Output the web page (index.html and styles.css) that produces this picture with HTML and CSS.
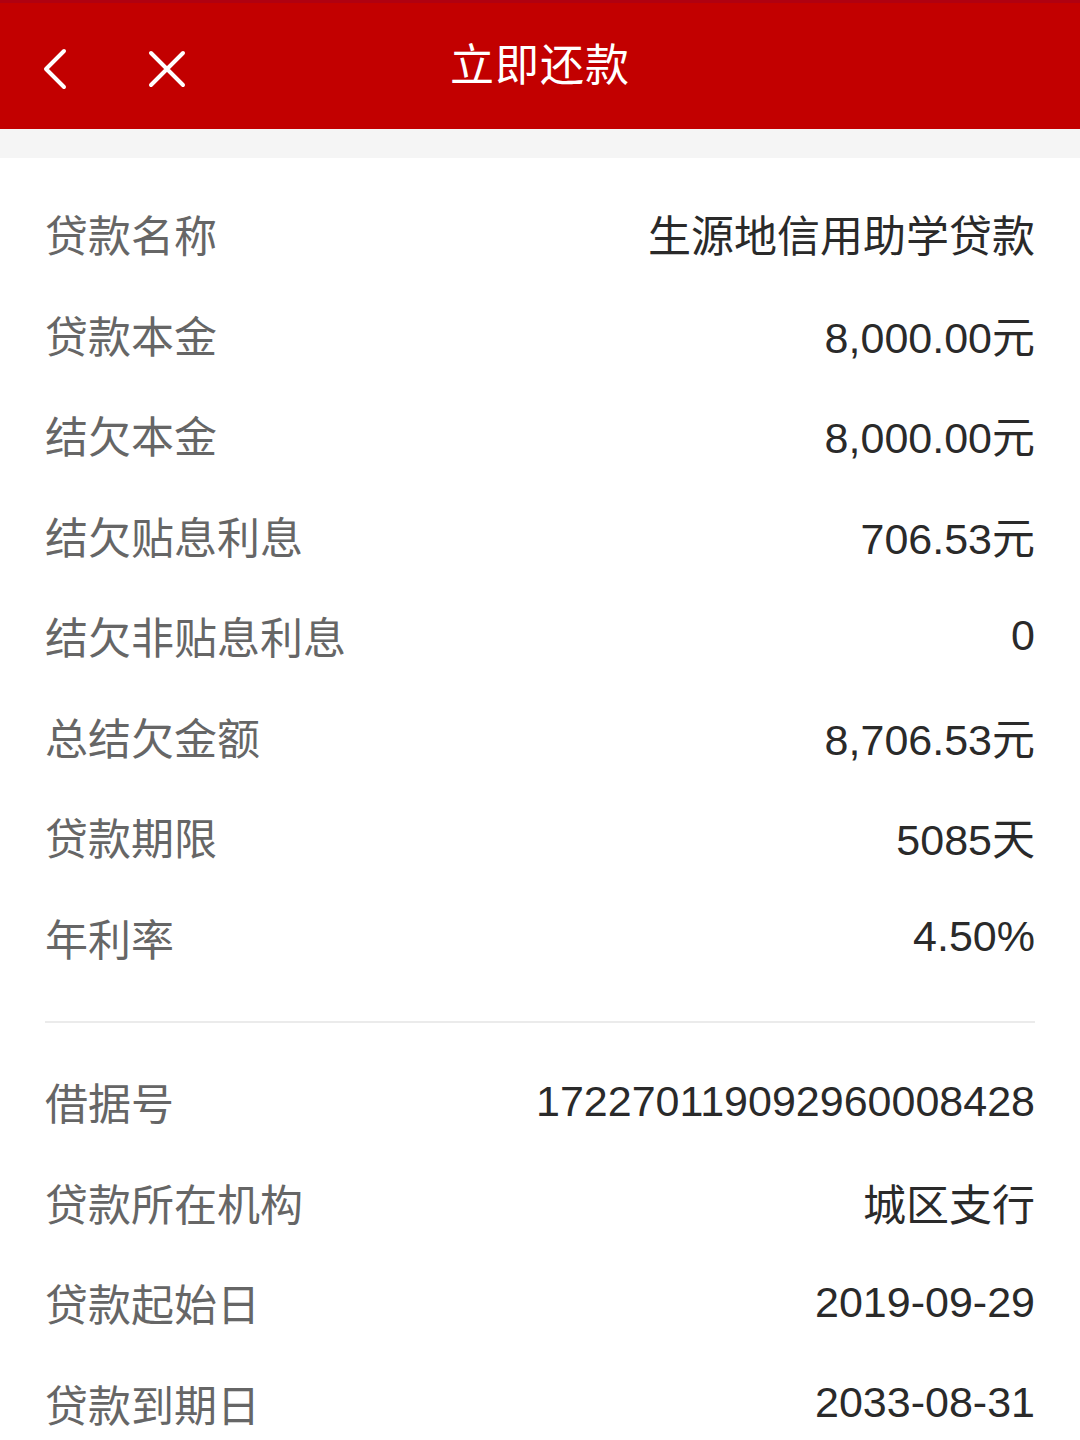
FILE: index.html
```html
<!DOCTYPE html>
<html lang="zh-CN">
<head>
<meta charset="utf-8">
<title>立即还款</title>
<link rel="stylesheet" href="styles.css">
</head>
<body>
<header class="topbar">
  <div class="nav-icons">
    <svg class="icon-back" width="30" height="44" viewBox="0 0 30 44"><path d="M22 4 L4 22 L22 40" fill="none" stroke="#fff" stroke-width="4" stroke-linecap="round" stroke-linejoin="round"/></svg>
    <svg class="icon-close" width="38" height="38" viewBox="0 0 38 38"><path d="M3 3 L35 35 M35 3 L3 35" fill="none" stroke="#fff" stroke-width="4" stroke-linecap="round"/></svg>
  </div>
  <h1 class="title">立即还款</h1>
</header>
<div class="band"></div>
<main class="content">
  <section class="group">
    <div class="row"><span class="label">贷款名称</span><span class="value">生源地信用助学贷款</span></div>
    <div class="row"><span class="label">贷款本金</span><span class="value">8,000.00元</span></div>
    <div class="row"><span class="label">结欠本金</span><span class="value">8,000.00元</span></div>
    <div class="row"><span class="label">结欠贴息利息</span><span class="value">706.53元</span></div>
    <div class="row"><span class="label">结欠非贴息利息</span><span class="value">0</span></div>
    <div class="row"><span class="label">总结欠金额</span><span class="value">8,706.53元</span></div>
    <div class="row"><span class="label">贷款期限</span><span class="value">5085天</span></div>
    <div class="row"><span class="label">年利率</span><span class="value">4.50%</span></div>
  </section>
  <hr class="divider">
  <section class="group">
    <div class="row"><span class="label">借据号</span><span class="value">172270119092960008428</span></div>
    <div class="row"><span class="label">贷款所在机构</span><span class="value">城区支行</span></div>
    <div class="row"><span class="label">贷款起始日</span><span class="value">2019-09-29</span></div>
    <div class="row"><span class="label">贷款到期日</span><span class="value">2033-08-31</span></div>
  </section>
</main>
</body>
</html>
```
FILE: styles.css
```css
html, body {
  margin: 0;
  padding: 0;
  background: #ffffff;
}
body {
  font-family: "Liberation Sans", "Noto Sans CJK SC", sans-serif;
  width: 1080px;
  overflow: hidden;
}
.topbar {
  position: relative;
  height: 129px;
  background: #c20000;
  border-top: 3px solid #b00010;
  box-sizing: border-box;
  display: flex;
  align-items: center;
  justify-content: center;
}
.nav-icons {
  position: absolute;
  left: 42px;
  top: 44px;
  display: flex;
  align-items: center;
  gap: 76px;
}
.title {
  margin: 0;
  color: #ffffff;
  font-family: "Noto Sans CJK SC", sans-serif;
  font-weight: 400;
  font-size: 44px;
  letter-spacing: 1px;
  line-height: 1;
  margin-top: -8px;
}
.band {
  height: 29px;
  background: #f5f5f5;
}
.content {
  padding: 25px 45px 0;
}
.row {
  height: 100.5px;
  display: flex;
  align-items: center;
  justify-content: space-between;
  font-size: 43px;
}
.label {
  color: #666666;
  font-family: "Noto Sans CJK SC", sans-serif;
}
.value {
  color: #2a2a2a;
  font-family: "Liberation Sans", "Noto Sans CJK SC", sans-serif;
}
.divider {
  border: 0;
  height: 2px;
  background: #ebebeb;
  margin: 34px 0 28px;
}
```
